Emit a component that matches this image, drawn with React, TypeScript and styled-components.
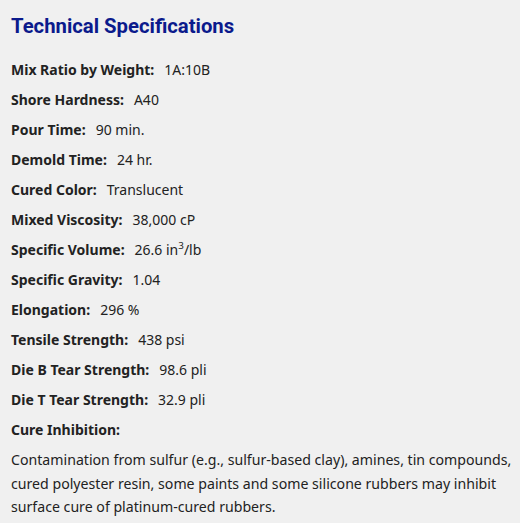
import React from "react";
import styled, { createGlobalStyle } from "styled-components";

const Global = createGlobalStyle`
  html, body { margin: 0; padding: 0; background: #f0f0f0; }
  body { font-family: "Noto Sans", "Open Sans", sans-serif; color: #222; }
`;

const Wrap = styled.section`
  padding: 11px 4px 0 11px;
`;

const Title = styled.h2`
  margin: 0 0 14px 0;
  font-family: Roboto, "Liberation Sans", sans-serif;
  font-weight: 700;
  font-size: 20.3px;
  line-height: 30px;
  color: #0b1a8c;
`;

const List = styled.dl`
  margin: 0;
  display: flex;
  flex-direction: column;
`;

const Row = styled.div`
  display: flex;
  align-items: baseline;
  height: 30px;
  font-size: 14px;
  line-height: 30px;
`;

const Label = styled.dt`
  font-weight: 700;
  margin-right: 10px;
`;

const Value = styled.dd`
  margin: 0;
`;

const Sup = styled.sup`
  font-size: 0.7em;
  line-height: 0;
`;

const Para = styled.p`
  margin: 3px 0 0 0;
  font-size: 14.15px;
  line-height: 23.5px;
`;

const specs: [string, React.ReactNode][] = [
  ["Mix Ratio by Weight:", "1A:10B"],
  ["Shore Hardness:", "A40"],
  ["Pour Time:", "90 min."],
  ["Demold Time:", "24 hr."],
  ["Cured Color:", "Translucent"],
  ["Mixed Viscosity:", "38,000 cP"],
  ["Specific Volume:", <>26.6 in<Sup>3</Sup>/lb</>],
  ["Specific Gravity:", "1.04"],
  ["Elongation:", "296 %"],
  ["Tensile Strength:", "438 psi"],
  ["Die B Tear Strength:", "98.6 pli"],
  ["Die T Tear Strength:", "32.9 pli"],
];

export default function App() {
  return (
    <>
      <Global />
      <Wrap>
        <Title>Technical Specifications</Title>
        <List>
          {specs.map(([l, v], i) => (
            <Row key={i}>
              <Label>{l}</Label>
              <Value>{v}</Value>
            </Row>
          ))}
          <Row>
            <Label>Cure Inhibition:</Label>
          </Row>
        </List>
        <Para>
          Contamination from sulfur (e.g., sulfur-based clay), amines, tin compounds,
          cured polyester resin, some paints and some silicone rubbers may inhibit
          surface cure of platinum-cured rubbers.
        </Para>
      </Wrap>
    </>
  );
}
